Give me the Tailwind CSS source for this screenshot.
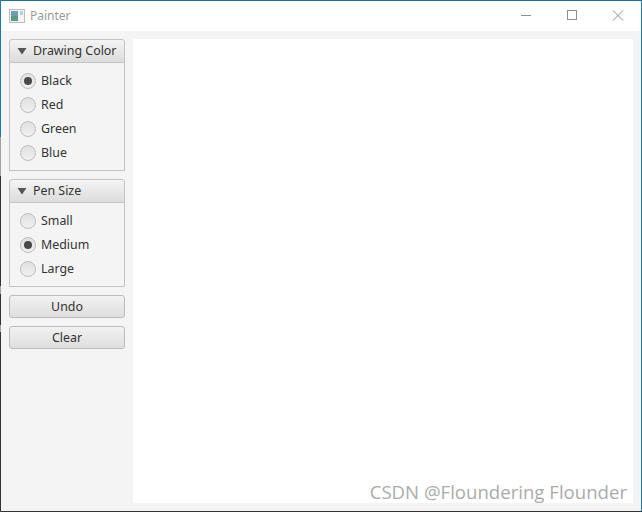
<!DOCTYPE html>
<html lang="en">
<head>
  <meta charset="UTF-8">
  <title>Painter</title>
  <script src="https://cdn.jsdelivr.net/npm/@tailwindcss/browser@4"></script>
</head>
<body class="w-[642px] h-[512px] overflow-hidden bg-white font-['Noto_Sans','Open_Sans',sans-serif] text-[12.4px] text-[#333]">
  <div class="relative flex flex-col w-full h-full border-t border-t-[#1c6ea4] border-b border-b-[#333] border-x border-x-[#1f78ac]">
    <!-- desktop behind the window shows through the left edge -->
    <div class="absolute -left-px top-[136px] bottom-0 w-px bg-[linear-gradient(to_bottom,#a0a0a0_0,#a0a0a0_39px,#333_39px,#333_149px,#a0a0a0_149px,#a0a0a0_157px,#333_157px,#333_188px,#a0a0a0_188px,#a0a0a0_195px,#333_195px)]"></div>
    <!-- Title bar -->
    <div class="flex items-center h-[30px] shrink-0 bg-white">
      <svg class="ml-[8px] w-[16px] h-[14px]" viewBox="0 0 16 14">
        <rect x="0.5" y="0.5" width="15" height="13" fill="#f4f4f4" stroke="#bdbdbd"/>
        <rect x="2" y="2" width="7" height="10" fill="#6f9db3"/>
        <rect x="2" y="7" width="7" height="5" fill="#5a9a82"/>
        <rect x="11" y="2" width="3" height="4" fill="#b5d0dc"/>
      </svg>
      <span class="ml-[5px] text-[12px] text-[#9a9a9a]">Painter</span>
      <div class="ml-auto flex items-center">
        <svg class="w-[46px] h-[30px]" viewBox="0 0 46 30"><path d="M18 14.5H28" stroke="#8f8f8f" fill="none"/></svg>
        <svg class="w-[46px] h-[30px]" viewBox="0 0 46 30"><rect x="18.5" y="9.5" width="9" height="9" stroke="#8f8f8f" fill="none"/></svg>
        <svg class="w-[46px] h-[30px]" viewBox="0 0 46 30"><path d="M18 9.5L28 19.5M28 9.5L18 19.5" stroke="#8f8f8f" fill="none"/></svg>
      </div>
    </div>

    <!-- Body -->
    <div class="flex flex-1 gap-[8px] bg-[#f4f4f4] pl-[8px] pr-[8px] pt-[8px] pb-[8px]">
      <div class="flex flex-col w-[116px] shrink-0">
        <section class="mb-[8px]">
          <div class="flex items-center h-[24px] border border-[#c4c4c4] rounded-t-[3px] bg-gradient-to-b from-[#f4f4f4] to-[#dcdcdc]">
            <svg class="ml-[7px] w-[10px] h-[8px]" viewBox="0 0 10 8"><path d="M0.5 1H9.5L5 7.5Z" fill="#555"/></svg>
            <span class="ml-[6px]">Drawing Color</span>
          </div>
          <div class="flex flex-col gap-[8px] h-[108px] pl-[10px] pt-[10px] border border-t-0 border-[#c4c4c4]">
            <label class="flex items-center gap-[5px] h-[16px]"><span class="flex items-center justify-center w-[16px] h-[16px] rounded-full border border-[#bdbdbd] bg-gradient-to-b from-[#e0e0e0] to-[#f0f0f0]"><span class="w-[8px] h-[8px] rounded-full bg-[#4a4a4a]"></span></span>Black</label>
            <label class="flex items-center gap-[5px] h-[16px]"><span class="w-[16px] h-[16px] rounded-full border border-[#bdbdbd] bg-gradient-to-b from-[#e0e0e0] to-[#f0f0f0]"></span>Red</label>
            <label class="flex items-center gap-[5px] h-[16px]"><span class="w-[16px] h-[16px] rounded-full border border-[#bdbdbd] bg-gradient-to-b from-[#e0e0e0] to-[#f0f0f0]"></span>Green</label>
            <label class="flex items-center gap-[5px] h-[16px]"><span class="w-[16px] h-[16px] rounded-full border border-[#bdbdbd] bg-gradient-to-b from-[#e0e0e0] to-[#f0f0f0]"></span>Blue</label>
          </div>
        </section>
        <section class="mb-[8px]">
          <div class="flex items-center h-[24px] border border-[#c4c4c4] rounded-t-[3px] bg-gradient-to-b from-[#f4f4f4] to-[#dcdcdc]">
            <svg class="ml-[7px] w-[10px] h-[8px]" viewBox="0 0 10 8"><path d="M0.5 1H9.5L5 7.5Z" fill="#555"/></svg>
            <span class="ml-[6px]">Pen Size</span>
          </div>
          <div class="flex flex-col gap-[8px] h-[84px] pl-[10px] pt-[10px] border border-t-0 border-[#c4c4c4]">
            <label class="flex items-center gap-[5px] h-[16px]"><span class="w-[16px] h-[16px] rounded-full border border-[#bdbdbd] bg-gradient-to-b from-[#e0e0e0] to-[#f0f0f0]"></span>Small</label>
            <label class="flex items-center gap-[5px] h-[16px]"><span class="flex items-center justify-center w-[16px] h-[16px] rounded-full border border-[#bdbdbd] bg-gradient-to-b from-[#e0e0e0] to-[#f0f0f0]"><span class="w-[8px] h-[8px] rounded-full bg-[#4a4a4a]"></span></span>Medium</label>
            <label class="flex items-center gap-[5px] h-[16px]"><span class="w-[16px] h-[16px] rounded-full border border-[#bdbdbd] bg-gradient-to-b from-[#e0e0e0] to-[#f0f0f0]"></span>Large</label>
          </div>
        </section>
        <button class="h-[23px] mb-[8px] pt-[1px] border border-[#bcbcbc] rounded-[3px] bg-gradient-to-b from-[#f2f2f2] to-[#dedede]">Undo</button>
        <button class="h-[23px] pt-[1px] border border-[#bcbcbc] rounded-[3px] bg-gradient-to-b from-[#f2f2f2] to-[#dedede]">Clear</button>
      </div>
      <!-- Canvas -->
      <div class="relative flex-1 bg-white">
        <span class="absolute right-[6px] bottom-[-3px] font-['Open_Sans',sans-serif] text-[18.6px] text-[#ababab]">CSDN @Floundering Flounder</span>
      </div>
    </div>
  </div>
</body>
</html>
